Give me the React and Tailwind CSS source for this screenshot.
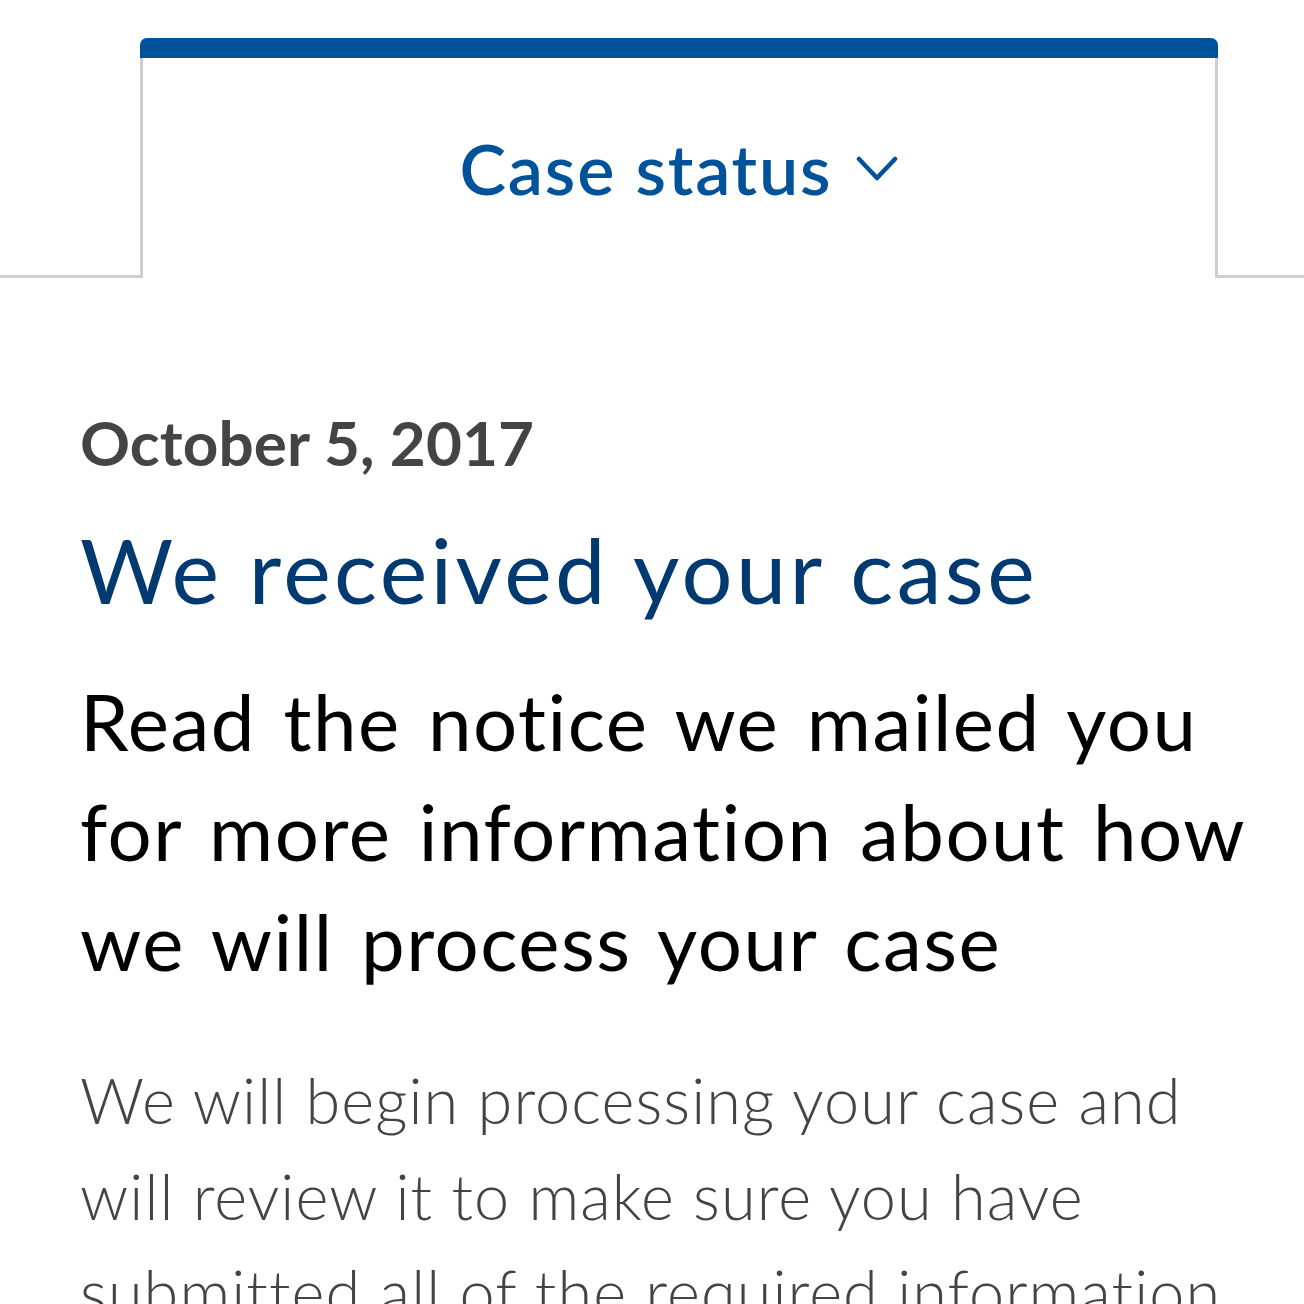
import React from 'react';

const Chevron = () => (
  <svg width="42" height="30" viewBox="0 0 42 30" fill="none" className="ml-[24px] mt-[2px]">
    <path d="M3 5 L21 24 L39 5" stroke="#00539b" strokeWidth="4.5" strokeLinecap="round" strokeLinejoin="round" />
  </svg>
);

const App = () => {
  return (
    <div className="min-h-screen bg-white overflow-hidden" style={{ fontFamily: 'Lato, "Open Sans", sans-serif' }}>
      <div className="flex pt-[38px]">
        <div className="w-[140px] border-b-[3px] border-[#cfcfcf]" />
        <div className="flex-1 flex flex-col">
          <div className="h-[20px] bg-[#00539b] rounded-t-[7px]" />
          <div className="h-[220px] border-x-[3px] border-[#cfcfcf] flex items-center justify-center">
            <span className="text-[70px] font-semibold text-[#00539b] tracking-[1.8px]">Case status</span>
            <Chevron />
          </div>
        </div>
        <div className="w-[86px] border-b-[3px] border-[#cfcfcf]" />
      </div>

      <div className="pl-[80px] pr-[30px] pt-[128px]">
        <div className="text-[62px] font-bold text-[#444444] leading-[72px] tracking-[0.1px]">October 5, 2017</div>
        <h1 className="mt-[36px] text-[90px] font-normal text-[#003a70] leading-[110px] tracking-[3.4px]">We received your case</h1>
        <h2 className="mt-[42px] text-[78px] font-normal text-black leading-[110px] tracking-[1.5px] [word-spacing:6px]">
          Read the notice we mailed you for more information about how we will process your case
        </h2>
        <p className="mt-[56px] text-[63px] font-light text-[#444444] leading-[96px] tracking-[1.1px]">
          We will begin processing your case and will review it to make sure you have submitted all of the required information
        </p>
      </div>
    </div>
  );
};

export default App;
